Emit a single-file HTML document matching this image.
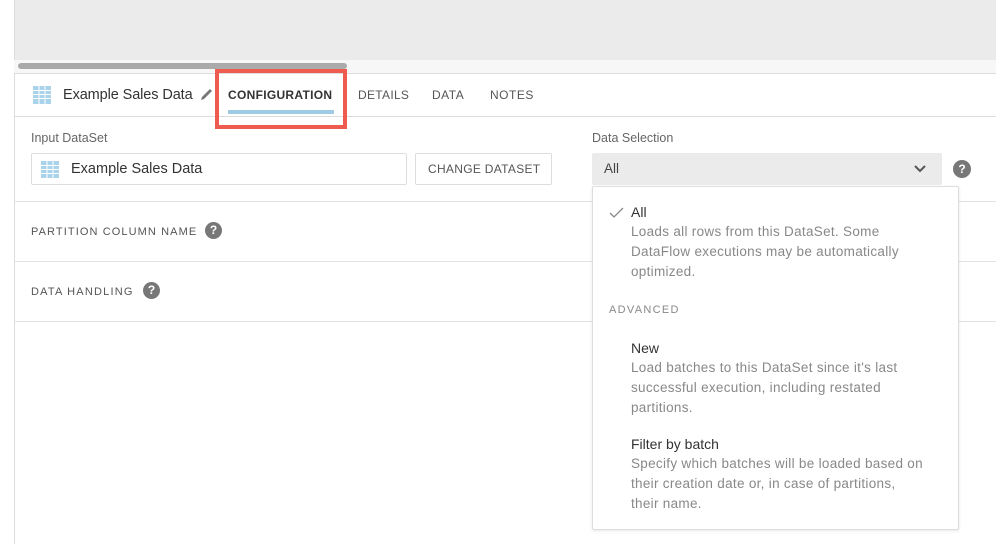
<!DOCTYPE html>
<html><head><style>
body{margin:0;width:996px;height:544px;background:#fff;font-family:"Liberation Sans",sans-serif;position:relative;overflow:hidden;color:#333}
div,span{position:absolute;box-sizing:border-box}
.t{white-space:nowrap}
.q{width:17px;height:17px;border-radius:50%;background:#777;color:#fff;font-size:12px;font-weight:bold;text-align:center;line-height:17px}
.cap{font-size:11px;letter-spacing:1.2px;color:#555}
.gray{color:#888;font-size:13.5px;line-height:20px;white-space:nowrap;letter-spacing:.3px}
</style></head><body>
<div style="left:14px;top:0;width:982px;height:60px;background:#ebebeb"></div>
<div style="left:14px;top:0;width:1px;height:544px;background:#ddd"></div>
<div style="left:14px;top:60px;width:982px;height:14px;background:#f7f7f7"></div>
<div style="left:18px;top:63px;width:329px;height:6px;background:#aaa;border-radius:3px"></div>
<div style="left:14px;top:73px;width:982px;height:1px;background:#ddd"></div>
<div style="left:14px;top:116px;width:982px;height:1px;background:#ddd"></div>
<svg style="position:absolute;left:33px;top:86px" width="18" height="18"><rect width="18" height="18" fill="#a9d3ea"/><g stroke="#fff" stroke-width="1"><line x1="0" y1="4.5" x2="18" y2="4.5"/><line x1="0" y1="8.5" x2="18" y2="8.5"/><line x1="0" y1="12.5" x2="18" y2="12.5"/><line x1="6" y1="0" x2="6" y2="18"/><line x1="12" y1="0" x2="12" y2="18"/></g></svg>
<div class="t" style="left:63px;top:87px;font-size:14.5px;color:#333;letter-spacing:-.1px">Example Sales Data</div>
<svg style="position:absolute;left:199px;top:87px" width="15" height="15"><path d="M2 13 L3 10 L11 2 L13 4 L5 12 Z" fill="#777"/></svg>
<div class="t" style="left:228px;top:88px;font-size:12px;font-weight:bold;letter-spacing:.3px;color:#333">CONFIGURATION</div>
<div style="left:228px;top:110px;width:106px;height:4px;background:#9ecae4"></div>
<div style="left:215px;top:69px;width:132px;height:60px;border:4px solid #ee5b50"></div>
<div class="t" style="left:358px;top:88px;font-size:12px;letter-spacing:.3px;color:#555">DETAILS</div>
<div class="t" style="left:432px;top:88px;font-size:12px;letter-spacing:.5px;color:#555">DATA</div>
<div class="t" style="left:490px;top:88px;font-size:12px;letter-spacing:.5px;color:#555">NOTES</div>
<div class="t" style="left:31px;top:131px;font-size:12.5px;color:#666">Input DataSet</div>
<div style="left:31px;top:153px;width:376px;height:32px;border:1px solid #ddd;border-radius:2px"></div>
<svg style="position:absolute;left:41px;top:161px" width="18" height="17"><rect width="18" height="17" fill="#a9d3ea"/><g stroke="#fff"><line x1="0" y1="4.5" x2="18" y2="4.5"/><line x1="0" y1="8.5" x2="18" y2="8.5"/><line x1="0" y1="12.5" x2="18" y2="12.5"/><line x1="6" y1="0" x2="6" y2="17"/><line x1="12" y1="0" x2="12" y2="17"/></g></svg>
<div class="t" style="left:71px;top:161px;font-size:14.5px">Example Sales Data</div>
<div style="left:415px;top:153px;width:137px;height:32px;border:1px solid #ddd;border-radius:2px"></div>
<div class="t" style="left:428px;top:162px;font-size:12px;letter-spacing:.3px;color:#555">CHANGE DATASET</div>
<div style="left:14px;top:201px;width:982px;height:1px;background:#e3e3e3"></div>
<div style="left:14px;top:261px;width:982px;height:1px;background:#e3e3e3"></div>
<div style="left:14px;top:321px;width:982px;height:1px;background:#e3e3e3"></div>
<div class="t cap" style="left:31px;top:226px;letter-spacing:1.1px">PARTITION COLUMN NAME</div>
<div class="q" style="left:205px;top:222px">?</div>
<div class="t cap" style="left:31px;top:286px">DATA HANDLING</div>
<div class="q" style="left:143px;top:282px">?</div>
<div class="t" style="left:592px;top:131px;font-size:12.5px;color:#666">Data Selection</div>
<div style="left:592px;top:153px;width:350px;height:32px;background:#ebebeb;border-radius:2px"></div>
<div class="t" style="left:604px;top:161px;font-size:13.5px;color:#444">All</div>
<svg style="position:absolute;left:913px;top:163px" width="14" height="12"><path d="M2 3 L7 8 L12 3" fill="none" stroke="#555" stroke-width="2"/></svg>
<div class="q" style="left:953px;top:160px;width:18px;height:18px;line-height:18px">?</div>
<div style="left:592px;top:186px;width:367px;height:344px;background:#fff;border:1px solid #ddd;border-radius:2px;box-shadow:0 1px 3px rgba(0,0,0,.1)"></div>
<svg style="position:absolute;left:609px;top:207px" width="16" height="12"><path d="M1 6 L5 10 L14 1" fill="none" stroke="#888" stroke-width="1.3"/></svg>
<div class="t" style="left:631px;top:204px;font-size:14px;color:#333">All</div>
<div class="gray" style="left:631px;top:222px">Loads all rows from this DataSet. Some<br>DataFlow executions may be automatically<br>optimized.</div>
<div class="t" style="left:609px;top:304px;font-size:11px;letter-spacing:1.3px;color:#888">ADVANCED</div>
<div class="t" style="left:631px;top:340px;font-size:14px;color:#333">New</div>
<div class="gray" style="left:631px;top:358px">Load batches to this DataSet since it's last<br>successful execution, including restated<br>partitions.</div>
<div class="t" style="left:631px;top:436px;font-size:14px;color:#333">Filter by batch</div>
<div class="gray" style="left:631px;top:454px">Specify which batches will be loaded based on<br>their creation date or, in case of partitions,<br>their name.</div>
</body></html>
